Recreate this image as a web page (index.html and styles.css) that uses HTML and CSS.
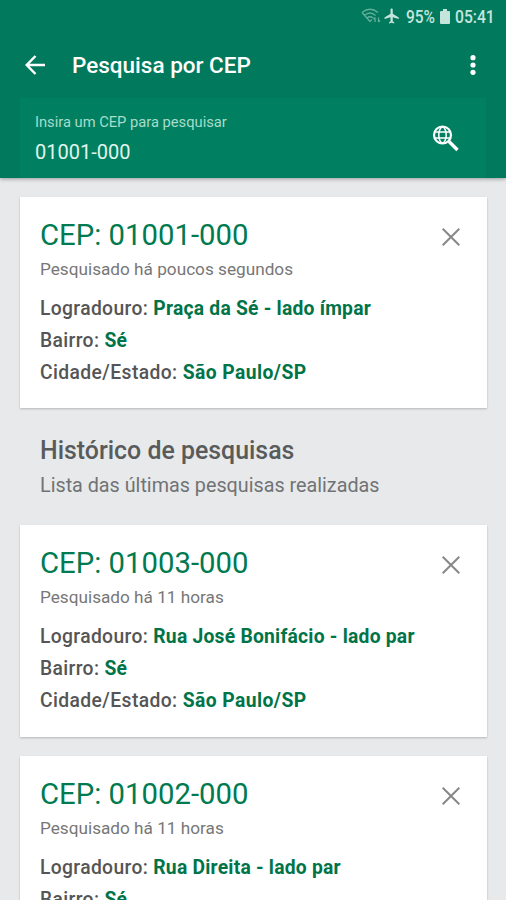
FILE: index.html
```html
<!DOCTYPE html>
<html lang="pt-BR">
<head>
<meta charset="utf-8">
<meta name="viewport" content="width=device-width">
<title>Pesquisa por CEP</title>
<link rel="stylesheet" href="styles.css">
</head>
<body>
<header class="header">
  <div class="status">
    <svg class="wifi" width="20" height="16" viewBox="0 0 20 16" fill="none" stroke="currentColor" stroke-width="1.3"><path d="M1 4.500Q9 -2 17 4.500M3.500 7.500Q9 2.500 14.500 7.500M6 10Q9 7.500 12 10M1 4.500 9 13.500l2-2M14 14V9.500m-1.500 1.500 1.500-1.500M17.500 9.500V14m1.500-1.500L17.500 14"/></svg>
    <svg class="plane" width="20" height="20" viewBox="0 0 24 24" fill="currentColor"><path d="M21 16v-2l-8-5V3.500C13 2.670 12.330 2 11.500 2S10 2.670 10 3.500V9l-8 5v2l8-2.500V19l-2 1.500V22l3.500-1 3.500 1v-1.500L13 19v-5.500l8 2.500z"/></svg>
    <span class="battery-text">95%</span>
    <svg class="battery" width="10" height="15" viewBox="0 0 10 15" fill="currentColor"><path d="M3 0h4v2h2q1 0 1 1v11q0 1-1 1H1q-1 0-1-1V3q0-1 1-1h2z"/></svg>
    <span class="clock">05:41</span>
  </div>
  <div class="toolbar">
    <svg class="back" width="20" height="20" viewBox="0 0 20 20" fill="none" stroke="currentColor" stroke-width="2.500"><path d="M20 10H2M10.500 1 1.700 10l8.800 9"/></svg>
    <h1 class="title">Pesquisa por CEP</h1>
    <svg class="more" width="6" height="20" viewBox="0 0 6 20" fill="currentColor"><circle cx="3" cy="2.700" r="2.600"/><circle cx="3" cy="10" r="2.600"/><circle cx="3" cy="17.300" r="2.600"/></svg>
  </div>
  <div class="search">
    <div class="field">
      <div class="label">Insira um CEP para pesquisar</div>
      <div class="value">01001-000</div>
    </div>
    <svg class="search-icon" width="27" height="27" viewBox="0 0 27 27" fill="none" stroke="currentColor"><circle cx="10.500" cy="10" r="8.500" stroke-width="2.200"/><ellipse cx="10.500" cy="10" rx="3.700" ry="8" stroke-width="1.500"/><path d="M3 7h15M3 13h15" stroke-width="1.500"/><path d="m17 16.500 8.500 8.500" stroke-width="3.400"/></svg>
  </div>
</header>
<main class="content">
  <article class="card">
    <svg class="close" width="18" height="18" viewBox="0 0 18 18"><path d="m.7.7 16.600 16.600M17.300.7.7 17.300"/></svg>
    <h2 class="cep">CEP: 01001-000</h2>
    <p class="when">Pesquisado há poucos segundos</p>
    <p class="row">Logradouro: <b>Praça da Sé - lado ímpar</b></p>
    <p class="row">Bairro: <b>Sé</b></p>
    <p class="row city">Cidade/Estado: <b>São Paulo/SP</b></p>
  </article>
  <section class="history">
    <h2 class="history-title">Histórico de pesquisas</h2>
    <p class="history-text">Lista das últimas pesquisas realizadas</p>
  </section>
  <article class="card tall">
    <svg class="close" width="18" height="18" viewBox="0 0 18 18"><path d="m.7.7 16.600 16.600M17.300.7.7 17.300"/></svg>
    <h2 class="cep">CEP: 01003-000</h2>
    <p class="when">Pesquisado há 11 horas</p>
    <p class="row">Logradouro: <b>Rua José Bonifácio - lado par</b></p>
    <p class="row">Bairro: <b>Sé</b></p>
    <p class="row city">Cidade/Estado: <b>São Paulo/SP</b></p>
  </article>
  <article class="card">
    <svg class="close" width="18" height="18" viewBox="0 0 18 18"><path d="m.7.7 16.600 16.600M17.300.7.7 17.300"/></svg>
    <h2 class="cep">CEP: 01002-000</h2>
    <p class="when">Pesquisado há 11 horas</p>
    <p class="row">Logradouro: <b>Rua Direita - lado par</b></p>
    <p class="row">Bairro: <b>Sé</b></p>
  </article>
</main>
</body>
</html>
```
FILE: styles.css
```css
* { box-sizing: border-box; }
body {
  margin: 0;
  height: 900px;
  overflow: hidden;
  display: flex;
  flex-direction: column;
  background: #e8e9eb;
  font-family: Roboto, sans-serif;
}
h1, h2, p { margin: 0; white-space: nowrap; }
svg { display: block; flex: none; }
.header {
  flex: none;
  height: 178px;
  background: #00795c;
  color: #fff;
  box-shadow: 0 1px 4px rgba(0, 0, 0, .35);
}
.status {
  height: 32px;
  display: flex;
  align-items: center;
  justify-content: flex-end;
  padding-right: 12px;
  color: #c5e5dc;
  font-size: 18px;
  font-weight: 500;
}
.wifi { opacity: .5; margin-right: 2px; }
.plane { margin-right: 5px; width: 18px; }
.battery-text { width: 30px; transform: scaleX(.86); transform-origin: left; }
.battery { margin: 0 5px 0 4px; }
.clock { width: 39px; transform: scaleX(.87); transform-origin: left; }
.toolbar {
  height: 66px;
  display: flex;
  align-items: center;
  padding: 0 30px 0 25px;
}
.title {
  margin-left: 27px;
  flex: 1;
  font-size: 22.500px;
  font-weight: 500;
}
.search {
  margin: 0 20px;
  height: 80px;
  display: flex;
  align-items: flex-start;
  justify-content: space-between;
  padding: 14px 27px 0 15px;
  background: #008060;
}
.label { font-size: 14.700px; line-height: 20px; color: #a8dccc; white-space: nowrap; }
.value { margin-top: 8px; font-size: 20px; line-height: 24px; color: #e0f5ee; }
.search-icon { margin-top: 13px; }
.content { padding: 19px 19px 0 20px; }
.card {
  position: relative;
  height: 211px;
  padding: 19px 20px 0;
  background: #fff;
  box-shadow: 0 1px 2px rgba(0, 0, 0, .22);
}
.tall { height: 212px; }
.card + .card { margin-top: 19px; }
.close { position: absolute; top: 31px; right: 27px; fill: none; stroke: #888; stroke-width: 2; }
.cep { font-size: 29.300px; line-height: 38px; font-weight: 400; color: #007a50; }
.when { margin-top: 3px; margin-bottom: 12px; font-size: 17.200px; line-height: 24px; color: #777; }
.row { font-size: 19.300px; line-height: 32.200px; font-weight: 500; letter-spacing: .35px; color: #555; }
.row b { font-weight: 700; letter-spacing: .23px; color: #007448; }
.city { letter-spacing: .4px; }
.city b { letter-spacing: .42px; }
.history { height: 117px; padding: 27px 20px 0; }
.history-title { font-size: 24.900px; line-height: 32px; font-weight: 500; color: #585b5c; }
.history-text { margin-top: 7px; font-size: 19.750px; line-height: 24px; color: #707375; }
```
